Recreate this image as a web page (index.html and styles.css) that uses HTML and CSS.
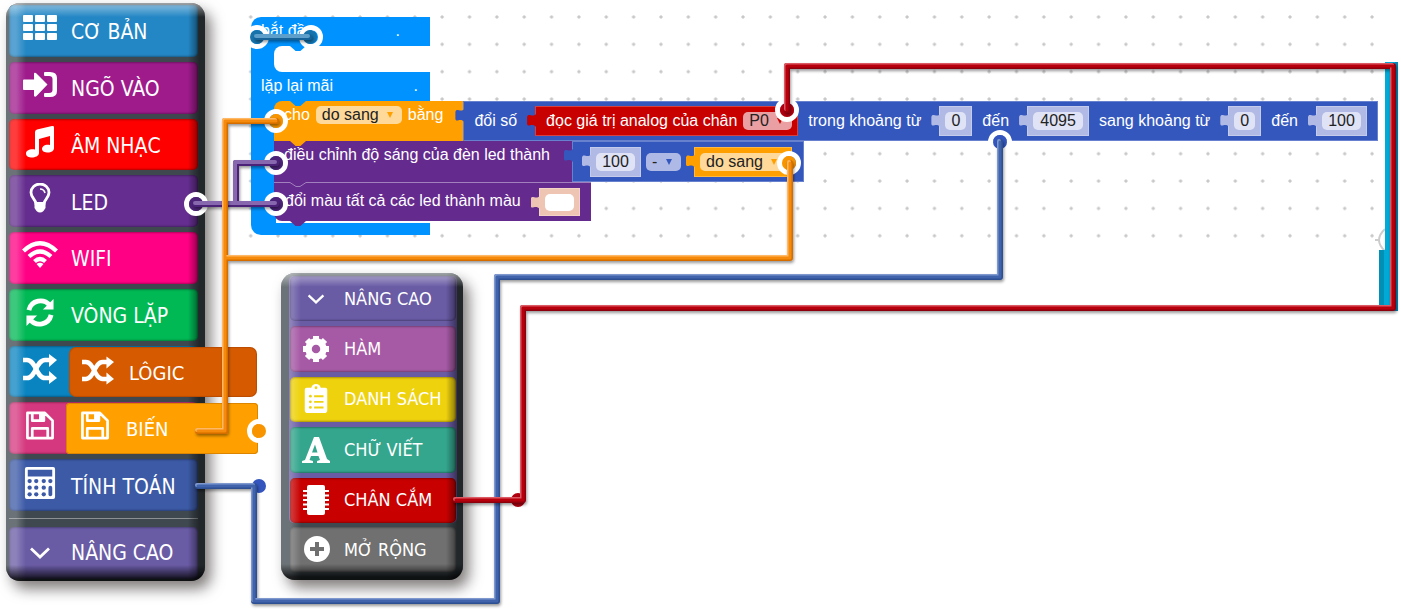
FILE: index.html
```html
<!DOCTYPE html>
<html lang="vi">
<head>
<meta charset="utf-8">
<title>Lập trình khối</title>
<link rel="stylesheet" href="styles.css">
</head>
<body>
<svg class="symbols" aria-hidden="true">
  <symbol id="i-grid" viewBox="0 0 34 28"><g fill="currentColor"><rect x="0" y="1" width="10" height="7" rx="1"/><rect x="12" y="1" width="10" height="7" rx="1"/><rect x="24" y="1" width="10" height="7" rx="1"/><rect x="0" y="10" width="10" height="7" rx="1"/><rect x="12" y="10" width="10" height="7" rx="1"/><rect x="24" y="10" width="10" height="7" rx="1"/><rect x="0" y="19" width="10" height="7" rx="1"/><rect x="12" y="19" width="10" height="7" rx="1"/><rect x="24" y="19" width="10" height="7" rx="1"/></g></symbol>
  <symbol id="i-enter" viewBox="0 0 34 28"><path fill="currentColor" d="M1 8.500h10V3c0-1.500 1.500-1.500 2.500-.5l11 11-11 11.500c-1 1-2.500 1-2.500-.5V19H1q-1 0-1-1V9.500q0-1 1-1zM22 1h5q7 0 7 6v13q0 6-7 6h-5q-1 0-1-1v-2q0-1 1-1h4q3.500 0 3.500-3V8q0-3-3.500-3h-4q-1 0-1-1V2q0-1 1-1z"/></symbol>
  <symbol id="i-music" viewBox="0 0 34 32"><path fill="currentColor" d="M12 6q0-2 2-2.500L29 0q2-.4 2 1.500V22c0 3-3 4.500-6 4.500s-6-1-6-3.500 3-5 8-4V10l-11 3v14c0 3-4 4.500-7 4.500s-6-1-6-4 4-5 9-4z"/></symbol>
  <symbol id="i-bulb" viewBox="0 0 34 32"><path fill="none" stroke="currentColor" stroke-width="2.800" d="M13 20.500c-.5-4-5-6-5-11a9 8.500 0 0 1 18 0c0 5-4.500 7-5 11z"/><path fill="none" stroke="currentColor" stroke-width="1.600" d="M17 6q4 0 5 4"/><path fill="currentColor" d="M11.500 19h11v6l-2 3q-3.500 3-7 0l-2-3z"/></symbol>
  <symbol id="i-wifi" viewBox="0 0 36 28"><g fill="none" stroke="currentColor" stroke-width="4.200"><path d="M1.500 10q16.500-15.500 33 0"/><path d="M7 15.500q11-10 22 0"/><path d="M12.500 20.500q5.500-5 11 0"/></g><path fill="currentColor" d="M14.500 23q3.500-2.500 7 0L18 27z"/></symbol>
  <symbol id="i-sync" viewBox="0 0 30 30"><g fill="none" stroke="currentColor" stroke-width="5"><path d="M3.500 12.500C6 2 19 0 25 7.500"/><path d="M26.500 17.500C24 28 11 30 5 22.500"/></g><path fill="currentColor" d="M29 1v11H18zM1 29V18h11z"/></symbol>
  <symbol id="i-shuffle" viewBox="0 0 34 30"><g fill="none" stroke="currentColor" stroke-width="4.600"><path d="M0 6h4c9 0 9 18 18 18h5"/><path d="M0 24h4c9 0 9-18 18-18h5"/></g><path fill="currentColor" d="M26 0l8 6-8 7zM26 17l8 7-8 6z"/></symbol>
  <symbol id="i-save" viewBox="0 0 30 30"><path fill="none" stroke="currentColor" stroke-width="2.800" stroke-linejoin="round" d="M2 2h18l8 8v18H2zM7 28V18h16v10M7 2v8h12V2"/><path fill="currentColor" d="M14 2h5v8h-5z"/></symbol>
  <symbol id="i-calc" viewBox="0 0 32 34"><path fill="currentColor" fill-rule="evenodd" d="M2 0h28q2 0 2 2v30q0 2-2 2H2q-2 0-2-2V2q0-2 2-2zM3 3v7h26V3z"/><g class="hole"><circle cx="5" cy="15" r="2.300"/><circle cx="12" cy="15" r="2.300"/><circle cx="20" cy="15" r="2.300"/><circle cx="27" cy="15" r="2.300"/><circle cx="5" cy="22" r="2.300"/><circle cx="12" cy="22" r="2.300"/><circle cx="20" cy="22" r="2.300"/><circle cx="5" cy="29" r="2.300"/><circle cx="12" cy="29" r="2.300"/><circle cx="20" cy="29" r="2.300"/><rect x="25" y="20" width="4" height="11" rx="2"/></g></symbol>
  <symbol id="i-chevron" viewBox="0 0 34 28"><path fill="none" stroke="currentColor" stroke-width="2.800" d="M8 9.500l9 8.500 9-8.500"/></symbol>
  <symbol id="i-gear" viewBox="0 0 28 28"><circle cx="14" cy="14" r="7.500" fill="none" stroke="currentColor" stroke-width="6.500"/><path fill="none" stroke="currentColor" stroke-width="6" d="M14 1v4M14 23v4M1 14h4M23 14h4M5 5l3 3M20 20l3 3M5 23l3-3M20 8l3-3"/></symbol>
  <symbol id="i-list" viewBox="0 0 28 32"><path fill="currentColor" d="M4 4h5q1-4 5-4t5 4h5q2 0 2 2v22q0 3-3 3H5q-3 0-3-3V6q0-2 2-2z"/><g class="hole"><circle cx="14" cy="4" r="1.500"/><path d="M12 12h10v2H12zM12 18h10v2H12zM12 24h10v2H12z"/><circle cx="8" cy="13" r="1.500"/><circle cx="8" cy="19" r="1.500"/><circle cx="8" cy="25" r="1.500"/></g></symbol>
  <symbol id="i-font" viewBox="0 0 28 28"><path fill="currentColor" fill-rule="evenodd" d="M0 27v-2l3-1L12 1h5l8 22 3 2v2H15v-2l3-1-1.500-4H9l-1.500 4 3.500 1v2zM10 16.500h5.500L13 8.500z"/></symbol>
  <symbol id="i-chip" viewBox="0 0 28 30"><rect x="5" y="0" width="18" height="30" rx="2" fill="currentColor"/><path stroke="currentColor" stroke-width="2" d="M1 6h26M1 10.500h26M1 15h26M1 19.500h26M1 24h26"/></symbol>
  <symbol id="i-plus" viewBox="0 0 28 28"><circle cx="15" cy="13" r="13" fill="currentColor"/><path class="hole" d="M13 6h4v5h5v4h-5v5h-4v-5H8v-4h5z"/></symbol>
</svg>

<div class="editor">
  <nav class="panel palette" aria-label="Nhóm lệnh">
    <ul class="menu">
      <li><button class="item basic"><svg><use href="#i-grid"/></svg>CƠ BẢN</button></li>
      <li><button class="item input"><svg><use href="#i-enter"/></svg>NGÕ VÀO</button></li>
      <li><button class="item music"><svg><use href="#i-music"/></svg>ÂM NHẠC</button></li>
      <li><button class="item led"><svg><use href="#i-bulb"/></svg>LED</button></li>
      <li><button class="item wifi"><svg><use href="#i-wifi"/></svg>WIFI</button></li>
      <li><button class="item loop"><svg><use href="#i-sync"/></svg>VÒNG LẶP</button></li>
      <li class="has-card"><span class="item logic"><svg><use href="#i-shuffle"/></svg></span><button class="card card-logic"><svg><use href="#i-shuffle"/></svg>LÔGIC</button></li>
      <li class="has-card"><span class="item variable"><svg><use href="#i-save"/></svg></span><button class="card card-variable"><svg><use href="#i-save"/></svg>BIẾN</button></li>
      <li><button class="item math"><svg><use href="#i-calc"/></svg>TÍNH TOÁN</button></li>
    </ul>
    <hr class="divider">
    <button class="item advanced"><svg><use href="#i-chevron"/></svg>NÂNG CAO</button>
  </nav>

  <main class="stage">
    <section class="program" aria-label="Chương trình">
      <div class="head first"><span>bắt đầu</span><span class="stop">.</span></div>
      <div class="slot"><div class="gap"></div></div>
      <div class="head second"><span>lặp lại mãi</span><span class="stop">.</span></div>
      <div class="stack">
        <div class="row">
          <div class="block orange">
            <span>cho</span>
            <label class="drop"><select aria-label="Biến"><option>do sang</option></select></label>
            <span>bằng</span>
          </div>
          <div class="value blue wide">
            <span>đổi số</span>
            <div class="value red">
              <span>đọc giá trị analog của chân</span>
              <label class="drop pin"><select aria-label="Chân"><option>P0</option></select></label>
            </div>
            <label for="n1">trong khoảng từ</label>
            <div class="value pale"><input id="n1" class="one" value="0"></div>
            <label for="n2">đến</label>
            <div class="value pale"><input id="n2" class="four" value="4095"></div>
            <label for="n3">sang khoảng từ</label>
            <div class="value pale"><input id="n3" class="one" value="0"></div>
            <label for="n4">đến</label>
            <div class="value pale"><input id="n4" class="three" value="100"></div>
          </div>
        </div>
        <div class="row">
          <div class="block purple bright">
            <label for="n5">điều chỉnh độ sáng của đèn led thành</label>
          </div>
          <div class="value blue sum">
            <div class="value pale"><input id="n5" class="three" value="100"></div>
            <label class="drop minus"><select aria-label="Phép tính"><option>-</option></select></label>
            <div class="value orange"><label class="drop"><select aria-label="Biến"><option>do sang</option></select></label></div>
          </div>
        </div>
        <div class="row">
          <div class="block purple paint">
            <svg class="seam" viewBox="0 0 36 6" aria-hidden="true"><path d="M0 .5h16l6 4h4l6-4h4"/></svg>
            <label for="colour">đổi màu tất cả các led thành màu</label>
            <div class="value pink"><button id="colour" class="swatch" aria-label="Trắng"></button></div>
          </div>
        </div>
      </div>
      <div class="foot"></div>
    </section>

    <nav class="panel flyout" aria-label="Nâng cao">
      <ul class="menu">
        <li><button class="item advanced"><svg><use href="#i-chevron"/></svg>NÂNG CAO</button></li>
        <li><button class="item func"><svg><use href="#i-gear"/></svg>HÀM</button></li>
        <li><button class="item list"><svg><use href="#i-list"/></svg>DANH SÁCH</button></li>
        <li><button class="item text"><svg><use href="#i-font"/></svg>CHỮ VIẾT</button></li>
        <li><button class="item pins"><svg><use href="#i-chip"/></svg>CHÂN CẮM</button></li>
      </ul>
      <button class="item extend"><svg><use href="#i-plus"/></svg>MỞ RỘNG</button>
    </nav>
  </main>

  <svg class="backdrop" aria-hidden="true">
    <defs><pattern id="dots" x="237" y="3.300" width="27.350" height="27.350" patternUnits="userSpaceOnUse"><path d="M13.700 12v3.400M12 13.700h3.400" stroke="#c4c4c4" stroke-width="1.400"/></pattern></defs>
    <rect x="248" y="14" width="1130" height="225" fill="url(#dots)"/>
    <path d="M1385 229q-12 11 0 22M1375 240h4" fill="none" stroke="#ccc" stroke-width="2"/>
    <path d="M1385 62h13v249h-19v-61h6z" fill="#00a9d6"/>
    <path d="M1379 250h5v57h-5z" fill="#0090b6"/>
    <path d="M1395 62h3v249h-3z" fill="#0088b8"/>
  </svg>

  <svg class="wires" aria-hidden="true">
    <defs>
      <filter id="drop" x="-20" y="-20" width="1500" height="700" filterUnits="userSpaceOnUse"><feDropShadow dx="1" dy="2" stdDeviation="1.500" flood-color="#000" flood-opacity=".4"/></filter>
      <path id="w-start" d="M257 37H309"/>
      <path id="w-led" d="M196 204H276M236 204V163H276"/>
      <path id="w-var" d="M276 121H225V431H198M225 258H790V163"/>
      <path id="w-math" d="M198 486H254V601H497V277H1000V142"/>
      <path id="w-pin" d="M456 500H523V308H1393V66H787V110"/>
    </defs>
    <g class="ring"><circle cx="257" cy="37" r="9.500"/><circle cx="311" cy="37" r="9.500"/><circle cx="196" cy="204" r="9.500"/><circle cx="276" cy="204" r="9.500"/><circle cx="276" cy="163" r="9.500"/><circle cx="276" cy="121" r="9.500"/><circle cx="789" cy="163" r="9.500"/><circle cx="259" cy="431" r="9.500"/><circle cx="1000" cy="142" r="9.500"/><circle cx="787" cy="110" r="9.500"/></g>
    <g fill="#1673ac"><circle cx="257" cy="37" r="7"/><circle cx="310" cy="37" r="7"/></g>
    <g fill="#4c2378"><circle cx="196" cy="204" r="7"/><circle cx="276" cy="204" r="7"/><circle cx="276" cy="163" r="7"/></g>
    <g fill="#f79400"><circle cx="276" cy="121" r="7"/><circle cx="789" cy="163" r="7"/><circle cx="259" cy="431" r="7"/></g>
    <g fill="#3355bd"><circle cx="259" cy="486" r="7"/><circle cx="1000" cy="142" r="7"/></g>
    <g fill="#b10010"><circle cx="518" cy="500" r="7"/><circle cx="787" cy="110" r="7"/></g>
    <g filter="url(#drop)"><use href="#w-start" stroke="#12639a"/><use class="shine" href="#w-start" stroke="#5c9fcb"/></g>
    <g filter="url(#drop)"><use href="#w-led" stroke="#4c2378"/><use class="shine" href="#w-led" stroke="#8767ae"/></g>
    <g filter="url(#drop)"><use href="#w-math" stroke="#2d4f92"/><use class="shine" href="#w-math" stroke="#7f99cf"/><use class="core" href="#w-math" stroke="#4064ab"/></g>
    <g filter="url(#drop)"><use href="#w-pin" stroke="#8f0010"/><use class="shine" href="#w-pin" stroke="#db5a64"/><use class="core" href="#w-pin" stroke="#b8000f"/></g>
    <g filter="url(#drop)"><use href="#w-var" stroke="#d46c00"/><use class="shine" href="#w-var" stroke="#ffb866"/><use class="core" href="#w-var" stroke="#f58a0c"/></g>
  </svg>
</div>
</body>
</html>
```
FILE: styles.css
```css
* { box-sizing: border-box; }
body { margin: 0; background: #fff; font: 16px/18px "Liberation Sans", Arial, sans-serif; }
button, input, select { margin: 0; border: 0; font: inherit; }
.symbols { position: absolute; width: 0; height: 0; }
.editor { position: relative; display: flex; align-items: flex-start; min-height: 610px; padding: 3px 0 0 6px; }

/* Menus */
.panel { position: relative; color: #fff; background: #3e484e; border-radius: 14px; box-shadow: 6px 8px 14px rgba(30, 20, 20, .55); }
.panel::after {
  content: ""; position: absolute; inset: 0; border-radius: inherit; pointer-events: none;
  background:
    linear-gradient(to bottom, rgba(255,255,255,.5), rgba(255,255,255,0) 14px),
    linear-gradient(to top, rgba(0,0,0,.75) 3px, rgba(0,0,0,0) 16px),
    linear-gradient(to right, rgba(255,255,255,.24) 10px, rgba(255,255,255,0) 20px),
    linear-gradient(to left, rgba(0,0,0,.45) 6px, rgba(0,0,0,0) 17px);
}
.menu { display: grid; grid-auto-rows: 1fr; gap: 5px; margin: 0; padding: 0; list-style: none; }
.item, .card { display: flex; align-items: center; width: 100%; color: inherit; font-family: "DejaVu Sans Condensed", "Noto Sans", sans-serif; text-align: left; white-space: nowrap; cursor: pointer; }
.item { height: 100%; border-radius: 5px; background: var(--c); box-shadow: inset 0 0 2px 1px rgba(0, 0, 0, .3); }
.item svg, .card svg { flex: none; }
.hole { fill: var(--c); }
.palette { flex: none; width: 199px; padding: 2px 7px 2px 3px; }
.palette .menu { min-height: 506px; }
.palette .item { gap: 14px; padding: 3px 0 0 14px; font-size: 21px; line-height: 26px; }
.palette .item svg { width: 34px; height: 32px; margin-top: -8px; }
.palette .item.wifi svg { width: 36px; margin-left: -1px; margin-right: -1px; }
.palette .item.loop svg, .palette .item.variable svg { height: 29px; }
.palette .advanced { height: 52px; padding-top: 0; }
.palette .advanced svg { margin-top: 0; }
.divider { height: 1px; margin: 7px 0 8px; border: 0; background: #8c9092; }
.basic { --c: #2487c5; }
.input { --c: #9f1b8c; }
.music { --c: #ff0000; }
.led { --c: #642d8f; }
.wifi { --c: #ff0084; }
.loop { --c: #00b955; }
.logic { --c: #0a84c1; }
.variable { --c: #d6387f; }
.math { --c: #3c5aa6; }
.advanced { --c: #6a5ba5; }
.func { --c: #a65aa5; }
.list { --c: #efd20e; }
.text { --c: #34a68d; }
.pins { --c: #c80000; }
.extend { --c: #707070; }
.has-card { position: relative; }
.card { position: absolute; z-index: 2; top: 1px; bottom: 0; gap: 15px; font-size: 20px; line-height: 24px; }
.card svg { width: 32px; height: 29px; margin-top: -6px; }
.card-logic { left: 60px; width: 188px; padding: 2px 0 0 13px; border-radius: 7px; background: #d65b00; box-shadow: inset 0 0 1px 1px rgba(120, 40, 0, .3); }
.card-variable { left: 57px; width: 192px; padding: 0 0 0 13px; border-radius: 4px; background: #ffa000; box-shadow: inset 0 0 0 1px #dc8500; }

.flyout { width: 182px; margin: 38px 0 0 30px; padding: 3px 6px 8px 8px; }
.flyout .menu { min-height: 247px; padding: 0 1px; background: #6a5ba5; border-radius: 5px; }
.flyout .item { gap: 12px; padding: 0 0 0 12px; font-size: 18px; line-height: 24px; }
.flyout .item svg { width: 28px; height: 30px; margin-right: 2px; }
.flyout .extend { height: 45px; margin: 4px 1px 0; width: 166px; }

/* Block program */
.stage { position: relative; z-index: 1; flex: 1; min-width: 0; padding: 14px 0 0 46px; }
.program { color: #fff; white-space: nowrap; }
.head { position: relative; display: flex; justify-content: space-between; width: 179px; height: 29px; padding: 5px 12px 0 10px; background: #0093ff; }
.head.first { padding-right: 30px; border-radius: 10px 0 0 0; }
.head.first::after { content: ""; position: absolute; z-index: 1; left: 39px; top: 29px; width: 16px; height: 5px; background: #0093ff; clip-path: polygon(0 0, 100% 0, 65% 100%, 35% 100%); }
.slot { width: 179px; padding-left: 23px; background: linear-gradient(#0093ff, #0093ff) 0 0 / 40px 100% no-repeat; }
.gap { height: 26px; background: #fff; border-radius: 8px 0 0 8px; }
.stack { width: max-content; padding: 0 0 2px 23px; background: linear-gradient(#0093ff, #0093ff) 0 0 / 32px 20px no-repeat, linear-gradient(#0093ff, #0093ff) 0 0 / 25px 100% no-repeat; }
.foot { width: 179px; height: 12px; background: #0093ff; border-radius: 0 0 0 10px; }
.row { display: flex; }
.block { position: relative; display: flex; align-items: flex-start; gap: 6px; min-height: 40px; padding: 5px 10px; background: var(--c); }
.block::after { content: ""; position: absolute; z-index: 1; left: 16px; top: 100%; width: 16px; height: 5px; background: var(--c); clip-path: polygon(0 0, 100% 0, 65% 100%, 35% 100%); }
.orange { --c: #ffa000; --field: #ffd999; }
.blue { --c: #3457be; --field: #afb9e5; }
.red { --c: #c80000; --field: #eaa0a2; }
.pale { --c: #b0bae5; }
.pink { --c: #eec4b2; }
.purple { --c: #642a8e; }
.block.orange { padding-right: 20px; border-radius: 8px 0 0 0; }
.block.orange::before { content: ""; position: absolute; left: 16px; top: 0; width: 16px; height: 5px; background: #0093ff; clip-path: polygon(0 0, 100% 0, 65% 100%, 35% 100%); }
.bright { min-height: 41px; padding-right: 22px; }
.paint { min-height: 39px; padding: 10px 11px 0; border-radius: 0 0 0 8px; background: linear-gradient(#a27fbd, #a27fbd) 36px 0 / 100% 1px no-repeat var(--c); }
.seam { position: absolute; z-index: 2; left: 0; top: 0; width: 36px; height: 6px; fill: none; stroke: #a27fbd; }
.value { position: relative; display: flex; align-items: center; background: var(--c); box-shadow: inset 0 0 0 1px rgba(255, 255, 255, .25); }
.value::before { content: ""; position: absolute; left: -8px; top: 6px; width: 9px; height: 16px; background: var(--c); clip-path: path("M9 2 C5 6 1 0 0 5 V12 C1 16 5 10 9 15 Z"); }
.wide { padding: 0 11px; }
.value .value { height: 30px; margin: 0 10px 0 18px; padding: 0 6px; }
.value .value:last-child { margin-right: 0; }
.value .red { gap: 6px; padding-left: 11px; }
.sum { height: 41px; padding: 0 12px 0 0; }
.sum .pale { margin-right: 5px; }
.sum .value.orange { margin-left: 13px; }
.paint .value { height: 28px; margin: -4px 0 0 12px; padding: 0 6px; }
.swatch { width: 29px; height: 17px; padding: 0; border-radius: 5px; background: #fff; }
.value input { height: 18px; padding: 0; border-radius: 5px; background: #e0e3f5; color: #222; text-align: center; }
.value .one { width: 21px; }
.value .three { width: 39px; }
.value .four { width: 50px; }
.drop { position: relative; display: block; height: 18px; color: #222; }
.drop::after { content: ""; position: absolute; right: 9px; top: 6px; border: 3px solid transparent; border-top: 6px solid var(--c); border-bottom: 0; pointer-events: none; }
.drop select { display: block; height: 18px; padding: 0 23px 0 6px; appearance: none; border-radius: 5px; background: var(--field); color: inherit; line-height: 18px; }

.backdrop, .wires { position: absolute; inset: 0; width: 100%; height: 100%; pointer-events: none; }
.backdrop { z-index: 0; }
.wires { z-index: 4; fill: none; }
.wires use { stroke-width: 6; stroke-linecap: round; stroke-linejoin: round; }
.wires .shine { stroke-width: 4; transform: translate(-1px, -1px); }
.wires .core { stroke-width: 3; }
.ring { stroke: #fff; stroke-width: 5; }
```
